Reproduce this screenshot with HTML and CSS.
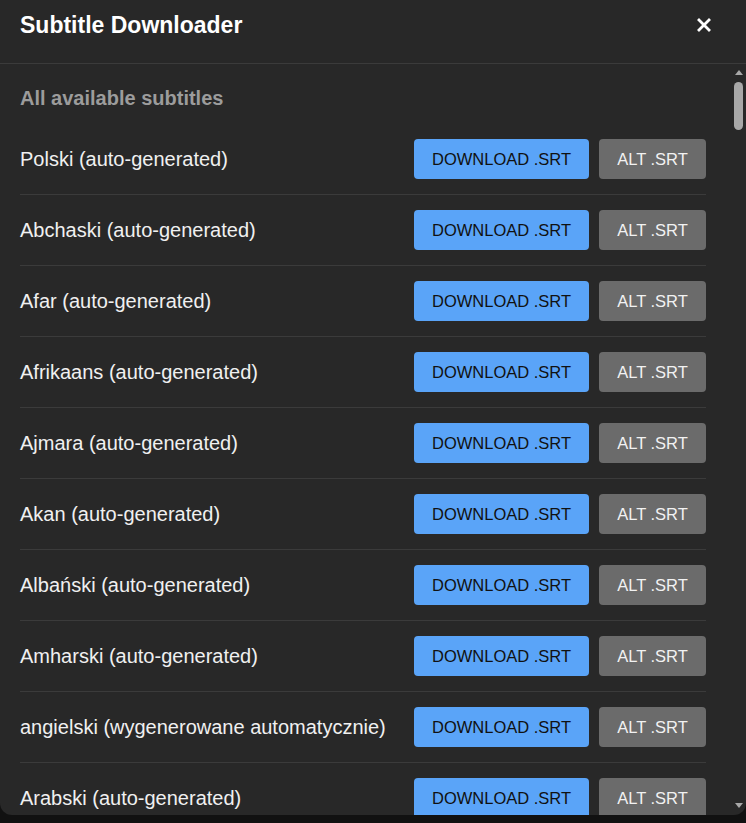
FILE: index.html
```html
<!DOCTYPE html>
<html lang="pl">
<head>
<meta charset="utf-8">
<title>Subtitle Downloader</title>
<link rel="stylesheet" href="styles.css">
</head>
<body>
<div class="modal">
  <header class="modal-header">
    <h1 class="modal-title">Subtitle Downloader</h1>
    <button class="close-btn" aria-label="Close">
      <svg width="14" height="14" viewBox="0 0 14 14"><path d="M2 2L12 12M12 2L2 12" stroke="#fff" stroke-width="2.8" stroke-linecap="square"/></svg>
    </button>
  </header>
  <div class="body-wrap">
    <div class="modal-body">
      <h2 class="section-title">All available subtitles</h2>
      <ul class="sub-list" id="list">
        <li class="sub-row"><span class="sub-name">Polski (auto-generated)</span><div class="actions"><button class="btn btn-dl">DOWNLOAD .SRT</button><button class="btn btn-alt">ALT .SRT</button></div></li>
        <li class="sub-row"><span class="sub-name">Abchaski (auto-generated)</span><div class="actions"><button class="btn btn-dl">DOWNLOAD .SRT</button><button class="btn btn-alt">ALT .SRT</button></div></li>
        <li class="sub-row"><span class="sub-name">Afar (auto-generated)</span><div class="actions"><button class="btn btn-dl">DOWNLOAD .SRT</button><button class="btn btn-alt">ALT .SRT</button></div></li>
        <li class="sub-row"><span class="sub-name">Afrikaans (auto-generated)</span><div class="actions"><button class="btn btn-dl">DOWNLOAD .SRT</button><button class="btn btn-alt">ALT .SRT</button></div></li>
        <li class="sub-row"><span class="sub-name">Ajmara (auto-generated)</span><div class="actions"><button class="btn btn-dl">DOWNLOAD .SRT</button><button class="btn btn-alt">ALT .SRT</button></div></li>
        <li class="sub-row"><span class="sub-name">Akan (auto-generated)</span><div class="actions"><button class="btn btn-dl">DOWNLOAD .SRT</button><button class="btn btn-alt">ALT .SRT</button></div></li>
        <li class="sub-row"><span class="sub-name">Albański (auto-generated)</span><div class="actions"><button class="btn btn-dl">DOWNLOAD .SRT</button><button class="btn btn-alt">ALT .SRT</button></div></li>
        <li class="sub-row"><span class="sub-name">Amharski (auto-generated)</span><div class="actions"><button class="btn btn-dl">DOWNLOAD .SRT</button><button class="btn btn-alt">ALT .SRT</button></div></li>
        <li class="sub-row"><span class="sub-name">angielski (wygenerowane automatycznie)</span><div class="actions"><button class="btn btn-dl">DOWNLOAD .SRT</button><button class="btn btn-alt">ALT .SRT</button></div></li>
        <li class="sub-row"><span class="sub-name">Arabski (auto-generated)</span><div class="actions"><button class="btn btn-dl">DOWNLOAD .SRT</button><button class="btn btn-alt">ALT .SRT</button></div></li>
      </ul>
    </div>
    <div class="scrollbar" aria-hidden="true">
      <span class="sb-arrow sb-up"></span>
      <div class="sb-track"><span class="sb-thumb"></span></div>
      <span class="sb-arrow sb-down"></span>
    </div>
  </div>
</div>
<script src="script.js"></script>
</body>
</html>
```
FILE: styles.css
```css
html, body {
  margin: 0;
  padding: 0;
  background: #111111;
  font-family: "Liberation Sans", Arial, sans-serif;
}
.modal {
  width: 746px;
  height: 815px;
  background: #282828;
  border-radius: 0 0 12px 12px;
  display: flex;
  flex-direction: column;
  overflow: hidden;
  color: #eeeeee;
}
.modal-header {
  display: flex;
  align-items: center;
  justify-content: space-between;
  padding: 12px 35px 25px 20px;
  border-bottom: 1px solid #3b3b3b;
  height: 26px;
}
.modal-title {
  margin: 0;
  font-size: 23px;
  font-weight: bold;
  color: #ffffff;
  line-height: 26px;
}
.close-btn {
  background: none;
  border: 0;
  padding: 0;
  width: 14px;
  height: 14px;
  display: flex;
  cursor: pointer;
}
.body-wrap {
  flex: 1;
  min-height: 0;
  position: relative;
  display: flex;
}
.modal-body {
  flex: 1;
  overflow-y: auto;
  padding: 24px 40px 0 20px;
  scrollbar-width: none;
}
.modal-body::-webkit-scrollbar {
  display: none;
}
.section-title {
  margin: 0 0 15px;
  font-size: 20px;
  line-height: 21px;
  font-weight: bold;
  color: #9c9c9c;
}
.sub-list {
  list-style: none;
  margin: 0;
  padding: 0;
}
.sub-row {
  display: flex;
  align-items: center;
  justify-content: space-between;
  padding: 15px 0;
  border-bottom: 1px solid #3b3b3b;
}
.sub-name {
  font-size: 20px;
  color: #f0f0f0;
}
.actions {
  display: flex;
  gap: 10px;
}
.btn {
  height: 40px;
  border: 0;
  border-radius: 4px;
  font-family: "Liberation Sans", Arial, sans-serif;
  font-size: 16.5px;
  padding: 0;
  text-align: center;
  cursor: pointer;
}
.btn-dl {
  width: 175px;
  background: #5aa4f8;
  color: #111111;
}
.btn-alt {
  width: 107px;
  background: #6b6b6b;
  color: #f2f2f2;
}
.scrollbar {
  position: absolute;
  top: 0;
  right: 0;
  bottom: 0;
  width: 15px;
  display: flex;
  flex-direction: column;
  align-items: center;
  padding: 6px 0 7px;
  box-sizing: border-box;
}
.sb-arrow {
  width: 0;
  height: 0;
  border-left: 4.5px solid transparent;
  border-right: 4.5px solid transparent;
}
.sb-up {
  border-bottom: 5px solid #a8a8a8;
}
.sb-down {
  border-top: 5px solid #a8a8a8;
}
.sb-track {
  flex: 1;
  width: 9px;
  padding-top: 7px;
}
.sb-thumb {
  display: block;
  width: 9px;
  height: 48px;
  border-radius: 5px;
  background: #a8a8a8;
}
```
FILE: script.js
```js
var names = ["Armeński","Asamski","Azerski","Balijski","Bambara","Baszkirski","Baskijski","Bengalski","Białoruski","Birmański","Bośniacki","Bretoński","Bułgarski","Buriacki","Cebuański","Chiński (Hongkong)","Chiński (Tajwan)","Chiński (uproszczony)","Chiński (tradycyjny)","Chorwacki","Czeczeński","Czeski","Czuwaski","Duński","Dzongkha","Esperanto","Estoński","Ewe","Farerski","Fidżyjski","Filipiński","Fiński","Francuski","Fryzyjski","Fulani","Ga","Galicyjski","Grecki","Grenlandzki","Gruziński","Guarani","Gudżarati","Haitański","Hausa","Hawajski","Hebrajski","Hindi","Hiszpański","Hmong","Igbo","Indonezyjski","Irlandzki","Islandzki","Japoński","Jawajski","Jidysz","Joruba","Kannada","Kantoński","Kaszmirski","Kataloński","Kazachski","Keczua","Khmerski","Kirgiski","Kongo","Koreański","Korsykański","Kreolski (Seszele)","Kurdyjski","Laotański","Łaciński","Łotewski","Lingala","Litewski","Luksemburski","Macedoński","Malajalam","Malajski","Malediwski","Malgaski","Maltański","Maori","Marathi","Marwari","Mongolski","Nepalski","Niderlandzki","Niemiecki","Norweski","Nyanja","Oksytański","Orija","Oromo","Osetyjski","Pendżabski","Paszto","Perski","Portugalski (Brazylia)","Portugalski (Portugalia)","Rosyjski","Rumuński","Rwanda","Samoański","Sanskryt","Serbski","Shona","Sindhi","Słowacki","Słoweński","Somalijski","Sotho","Suahili","Sundajski","Syngaleski","Szkocki gaelicki","Szwedzki","Tadżycki","Tajski","Tamilski","Tatarski","Telugu","Tigrinia","Tonga","Tsonga","Tswana","Turecki","Turkmeński","Tybetański","Ujgurski","Ukraiński","Urdu","Uzbecki","Walijski","Węgierski","Wietnamski","Włoski","Xhosa","Zulu"];
var list = document.getElementById("list");
names.forEach(function (n) {
  var li = document.createElement("li");
  li.className = "sub-row";
  li.innerHTML = '<span class="sub-name"></span><div class="actions"><button class="btn btn-dl">DOWNLOAD .SRT</button><button class="btn btn-alt">ALT .SRT</button></div>';
  li.querySelector(".sub-name").textContent = n + " (auto-generated)";
  list.appendChild(li);
});
```
